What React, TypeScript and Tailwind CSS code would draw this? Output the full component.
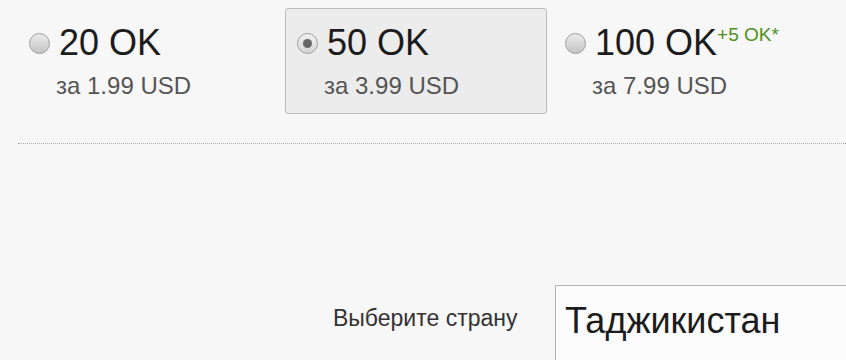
import React from 'react';

type Pack = { id: string; amount: string; price: string; bonus?: string };

const PACKS: Pack[] = [
  { id: 'p20', amount: '20 OK', price: 'за 1.99 USD' },
  { id: 'p50', amount: '50 OK', price: 'за 3.99 USD' },
  { id: 'p100', amount: '100 OK', price: 'за 7.99 USD', bonus: '+5 OK*' },
];

function Radio({ checked }: { checked: boolean }) {
  return (
    <span
      className={`flex h-[21px] w-[21px] shrink-0 items-center justify-center rounded-full border border-[#9c9c9c] ${
        checked
          ? 'bg-gradient-to-b from-[#f2f2f2] to-[#d6d6d6]'
          : 'bg-gradient-to-b from-[#ebebeb] to-[#c4c4c4]'
      }`}
    >
      {checked && <span className="h-[9px] w-[9px] rounded-full bg-[#676767]" />}
    </span>
  );
}

export default function App() {
  const selected = 'p50';

  return (
    <div className="h-[360px] w-[846px] overflow-hidden bg-[#f7f7f7] font-['Liberation_Sans',Arial,sans-serif]">
      {/* Package options */}
      <div className="flex pl-[17px] pt-[8px]">
        {PACKS.map((p) => {
          const active = p.id === selected;
          return (
            <div
              key={p.id}
              className={`mr-[6px] h-[106px] w-[262px] shrink-0 rounded-[3px] border px-[11px] pt-[14px] ${
                active ? 'border-[#bdbdbd] bg-[#ececec]' : 'border-transparent'
              }`}
            >
              <div className="flex items-center gap-[9px]">
                <Radio checked={active} />
                <span className="relative text-[36px] leading-[40px] text-[#1c1c1c]">
                  {p.amount}
                  {p.bonus && (
                    <span className="absolute left-full top-[2px] whitespace-nowrap text-[19px] leading-[19px] text-[#4f8f22]">
                      {p.bonus}
                    </span>
                  )}
                </span>
              </div>
              <div className="mt-[9px] pl-[27px] text-[24px] leading-[28px] text-[#555]">
                {p.price}
              </div>
            </div>
          );
        })}
      </div>

      {/* Divider */}
      <div className="ml-[18px] mt-[29px] border-t border-dotted border-[#a9a9a9]" />

      {/* Country picker */}
      <div className="mt-[141px] flex items-start">
        <div className="ml-[333px] mt-[20px] w-[222px] shrink-0 text-[23px] leading-[26px] text-[#333]">
          Выберите страну
        </div>
        <div className="h-[90px] w-[320px] shrink-0 border border-[#b3b3b3] bg-[#fbfbfb] pl-[9px] pt-[15px] text-[36px] leading-[40px] text-[#1c1c1c]">
          Таджикистан
        </div>
      </div>
    </div>
  );
}
